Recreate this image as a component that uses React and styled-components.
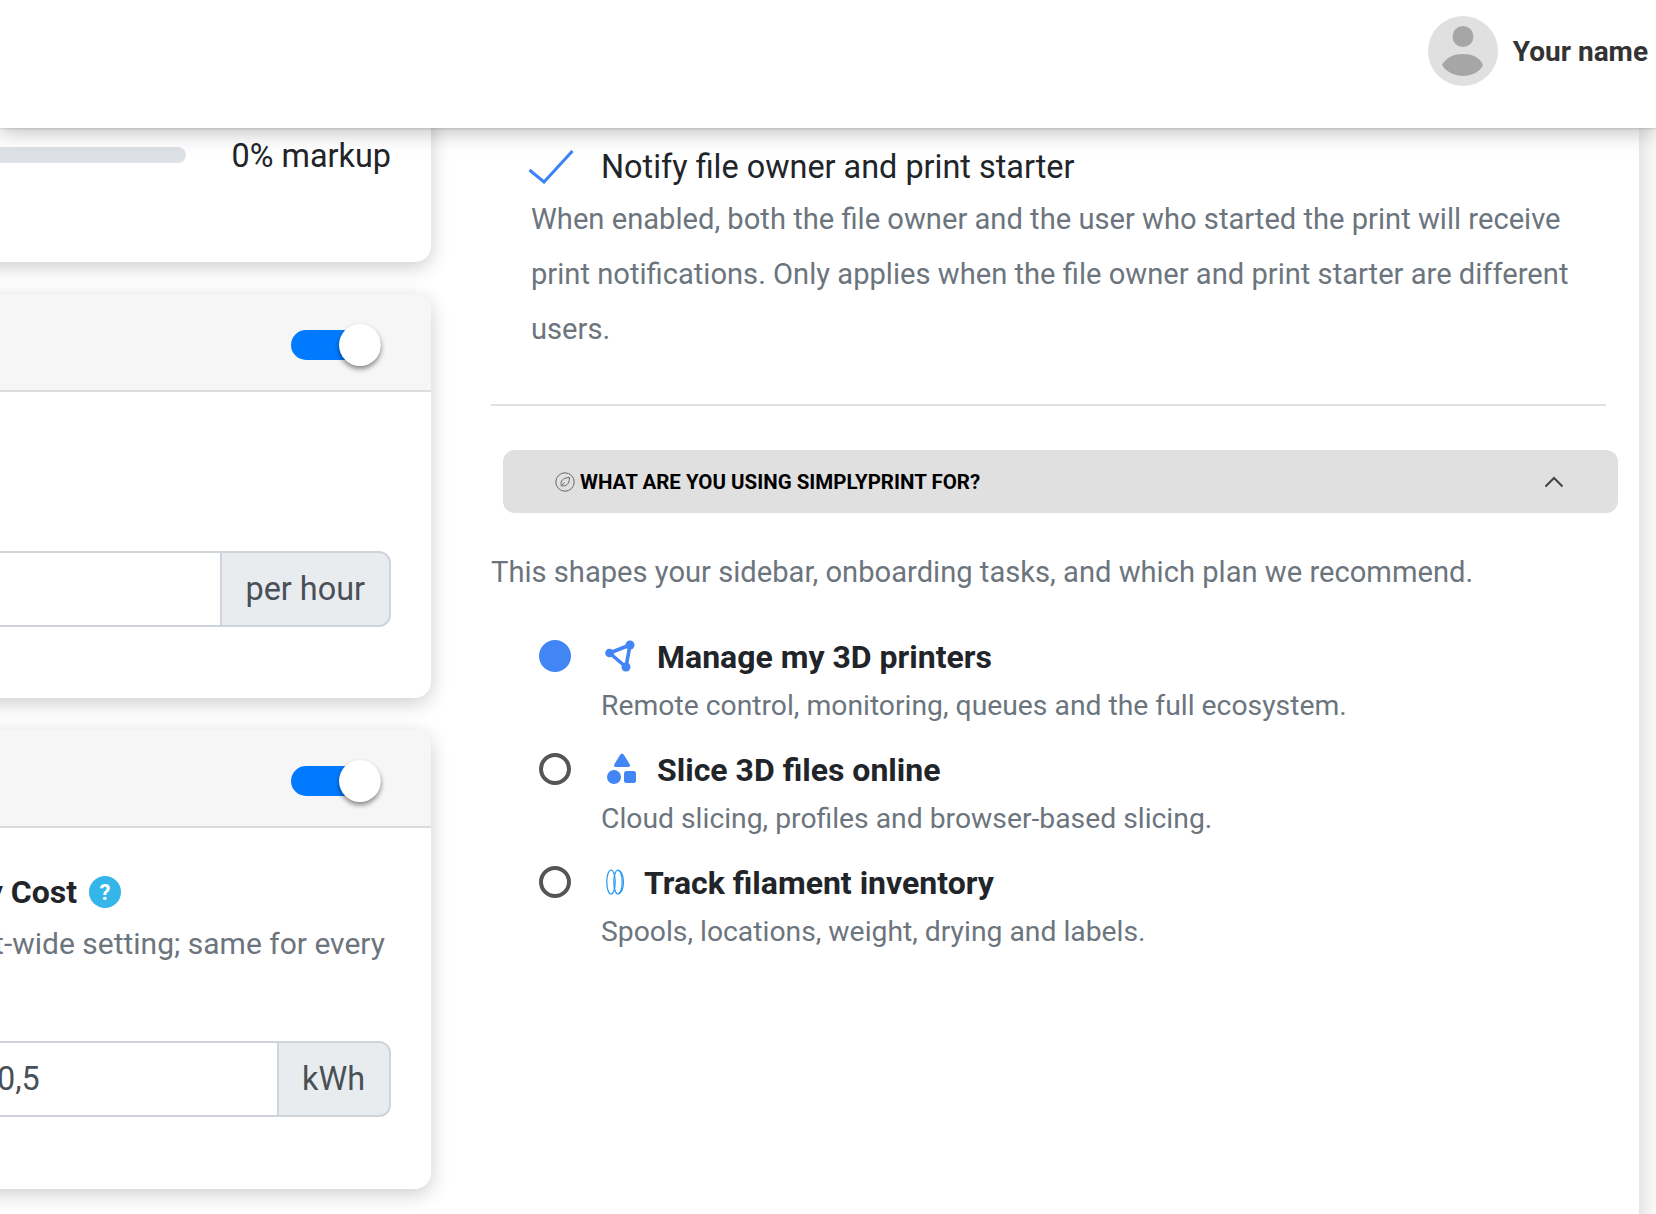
import React from "react";
import styled, { createGlobalStyle } from "styled-components";

const Global = createGlobalStyle`
  html, body { margin: 0; padding: 0; background: #fff; }
  body { font-family: Roboto, "Liberation Sans", sans-serif; color: #212529; }
  * { box-sizing: border-box; }
`;

const Page = styled.div`
  width: 1656px;
  height: 1214px;
  overflow: hidden;
  display: flex;
  flex-direction: column;
  background: #fff;
`;

const TopBar = styled.header`
  flex: 0 0 128px;
  height: 128px;
  background: #fff;
  box-shadow: 0 1px 2px rgba(0, 0, 0, 0.12), 0 4px 20px rgba(0, 0, 0, 0.26);
  position: relative;
  z-index: 5;
  display: flex;
  align-items: center;
  justify-content: flex-end;
  padding: 0 8px 26px 0;
  gap: 15px;
`;

const UserName = styled.span`
  font-size: 28px;
  font-weight: 700;
  color: #333;
`;

const Main = styled.main`
  flex: 1;
  display: flex;
  min-height: 0;
  align-items: flex-start;
`;

const LeftColumn = styled.div`
  width: 631px;
  margin-left: -200px;
  flex: none;
  display: flex;
  flex-direction: column;
  gap: 32px;
  margin-top: -60px;
  position: relative;
  z-index: 1;
`;

const Card = styled.section`
  background: #fff;
  border-radius: 16px;
  box-shadow: 0 5px 20px rgba(0, 0, 0, 0.2);
  height: ${(p) => p.$h}px;
  display: flex;
  flex-direction: column;
  overflow: hidden;
`;

const CardHead = styled.div`
  flex: 0 0 98px;
  background: #f6f6f6;
  border-bottom: 2px solid #dcdcdc;
  display: flex;
  align-items: center;
  justify-content: flex-end;
  padding-right: 50px;
`;

const Track = styled.span`
  width: 90px;
  height: 30px;
  margin-top: 5px;
  border-radius: 15px;
  background: #007bff;
  position: relative;
  display: block;
`;

const Knob = styled.span`
  position: absolute;
  right: 0;
  top: -6px;
  width: 42px;
  height: 42px;
  border-radius: 50%;
  background: #fff;
  box-shadow: 0 3px 5px rgba(0, 0, 0, 0.45);
`;

const MarkupBody = styled.div`
  display: flex;
  align-items: flex-start;
  padding: 69px 40px 0 0;
  justify-content: space-between;
`;

const Bar = styled.div`
  width: 386px;
  height: 16px;
  margin-top: 10px;
  border-radius: 8px;
  background: #dee2e6;
`;

const MarkupText = styled.span`
  font-size: 32.4px;
  line-height: 38px;
`;

const CardBody = styled.div`
  flex: 1;
  padding: ${(p) => p.$top}px 40px 0 0;
  display: flex;
  flex-direction: column;
  align-items: flex-end;
`;

const CostRow = styled.div`
  display: flex;
  align-items: center;
  gap: 12px;
  margin-right: 270px;
  height: 38px;
`;

const CostLabel = styled.span`
  font-size: 32px;
  font-weight: 700;
  white-space: nowrap;
`;

const Help = styled.span`
  width: 32px;
  height: 32px;
  border-radius: 50%;
  background: #35b6e8;
  color: #fff;
  font-size: 22px;
  font-weight: 700;
  display: flex;
  align-items: center;
  justify-content: center;
`;

const CostHint = styled.p`
  margin: 14px 6px 0 0;
  font-size: 30px;
  line-height: 38px;
  color: #6c757d;
  white-space: nowrap;
`;

const InputGroup = styled.div`
  display: flex;
  width: ${(p) => p.$w}px;
  height: 76px;
  margin-top: ${(p) => p.$mt || 0}px;
  font-size: 32.4px;
  color: #495057;
`;

const InputField = styled.div`
  flex: 1;
  border: 2px solid #ced4da;
  border-right: 0;
  background: #fff;
  display: flex;
  align-items: center;
  padding-left: ${(p) => p.$pad || 0}px;
`;

const Addon = styled.div`
  flex: none;
  border: 2px solid #ced4da;
  border-radius: 0 12px 12px 0;
  background: #e9ecef;
  padding: 0 24px 0 23px;
  display: flex;
  align-items: center;
`;

const RightPanel = styled.div`
  width: 1208px;
  flex: none;
  background: #fff;
  box-shadow: 0 0 28px rgba(0, 0, 0, 0.2);
  clip-path: inset(0 -40px -40px 0);
  height: 1140px;
  padding: 0 33px 0 60px;
`;

const CheckRow = styled.div`
  display: flex;
  align-items: center;
  height: 50px;
  margin-top: 14px;
  margin-left: 37px;
  gap: 27px;
`;

const CheckLabel = styled.span`
  font-size: 32.4px;
`;

const Hint = styled.p`
  margin: 0 0 0 40px;
  font-size: 29.15px;
  line-height: 55px;
  color: #6c757d;
`;

const Rule = styled.hr`
  border: 0;
  height: 2px;
  background: #dee2e6;
  margin: 47px 0 44px;
`;

const Accordion = styled.div`
  height: 63px;
  margin: 0 -12px 0 12px;
  background: #e0e0e0;
  border-radius: 12px;
  display: flex;
  align-items: center;
  padding: 0 54px 0 52px;
  font-size: 20.5px;
  font-weight: 700;
  color: #000;
  text-transform: uppercase;
`;

const AccordionTitle = styled.span`
  flex: 1;
  margin-left: 5px;
`;

const Lead = styled.p`
  margin: 39px 0 0;
  font-size: 29.15px;
  line-height: 40px;
  color: #6c757d;
`;

const Options = styled.div`
  margin: 44px 0 0 48px;
  display: flex;
  flex-direction: column;
`;

const Option = styled.div`
  display: grid;
  grid-template-columns: 32px auto 1fr;
  grid-template-rows: 40px 53px;
  height: 113px;
  align-items: center;
`;

const Radio = styled.span`
  width: 32px;
  height: 32px;
  border-radius: 50%;
  background: ${(p) => (p.$on ? "#4285f4" : "#fff")};
  border: ${(p) => (p.$on ? "0" : "4px solid #555")};
`;

const OptionIcon = styled.span`
  margin-left: ${(p) => p.$x}px;
  display: flex;
  width: ${(p) => p.$w}px;
`;

const OptionTitle = styled.span`
  font-size: 32px;
  font-weight: 700;
  color: #212529;
  padding-top: 1px;
  margin-left: ${(p) => p.$ml}px;
`;

const OptionHint = styled.span`
  grid-column: 2 / 4;
  margin-left: 30px;
  font-size: 28.3px;
  color: #6c757d;
  padding-top: 6px;
`;

const Avatar = () => (
  <svg width="70" height="70" viewBox="0 0 70 70">
    <circle cx="35" cy="35" r="35" fill="#e0e0e0" />
    <circle cx="35" cy="20.5" r="10.5" fill="#a6a6a6" />
    <path d="M14 49 C18 41 27 38 35 38 C43 38 52 41 55 49 C52 56 43 60 35 60 C27 60 18 56 14 49 Z" fill="#a6a6a6" />
  </svg>
);

const Check = () => (
  <svg width="46" height="34" viewBox="0 0 46 34" fill="none">
    <path d="M1.5 20 L16 32 L44.5 1" stroke="#3b82f6" strokeWidth="3" />
  </svg>
);

const Compass = () => (
  <svg width="20" height="20" viewBox="0 0 20 20" fill="none" stroke="#666" strokeWidth="1">
    <circle cx="10" cy="10" r="9.2" />
    <path d="M14.5 5.5 C10 5.5 6 7.5 6 11.5 C6 13 7 14 8.5 14 C12.5 14 14.5 10 14.5 5.5 Z M6 14.5 L9.5 10.5" />
  </svg>
);

const Chevron = () => (
  <svg width="20" height="12" viewBox="0 0 20 12" fill="none" stroke="#444" strokeWidth="2">
    <path d="M1.5 10.5 L10 2 L18.5 10.5" />
  </svg>
);

const PrinterIcon = () => (
  <svg width="30" height="32" viewBox="0 0 30 32" fill="none" stroke="#4285f4" strokeWidth="3.6" strokeLinejoin="round">
    <path d="M4.5 13 L25 5 L21 27 Z" />
    <circle cx="4.5" cy="13" r="4.3" fill="#4285f4" stroke="none" />
    <circle cx="25" cy="5" r="4.5" fill="#4285f4" stroke="none" />
    <circle cx="21" cy="27" r="4.5" fill="#4285f4" stroke="none" />
  </svg>
);

const ShapesIcon = () => (
  <svg width="30" height="32" viewBox="0 0 30 32" fill="#4285f4">
    <path d="M16 0.5 Q17 0.5 18 2 L23.5 11 Q25 14 22 14 H10 Q7 14 8.5 11 L14 2 Q15 0.5 16 0.5 Z" />
    <circle cx="8" cy="24" r="7" />
    <rect x="18" y="18" width="12" height="12" rx="2.5" />
  </svg>
);

const SpoolIcon = () => (
  <svg width="18" height="26" viewBox="0 0 18 26" fill="none" stroke="#2196f3" strokeWidth="1.2">
    <ellipse cx="5" cy="13" rx="4.2" ry="12" />
    <ellipse cx="12" cy="13" rx="4.2" ry="12" />
    <path d="M12 1.5 C15.5 2 17.4 7 17.4 13 C17.4 19 15.5 24 12 24.5" />
  </svg>
);

const Toggle = () => (
  <Track>
    <Knob />
  </Track>
);

export default function App() {
  return (
    <Page>
      <Global />
      <TopBar>
        <Avatar />
        <UserName>Your name</UserName>
      </TopBar>
      <Main>
        <LeftColumn>
          <Card $h={194}>
            <MarkupBody>
              <Bar />
              <MarkupText>0% markup</MarkupText>
            </MarkupBody>
          </Card>
          <Card $h={404}>
            <CardHead>
              <Toggle />
            </CardHead>
            <CardBody $top={159}>
              <InputGroup $w={420}>
                <InputField />
                <Addon>per hour</Addon>
              </InputGroup>
            </CardBody>
          </Card>
          <Card $h={459}>
            <CardHead>
              <Toggle />
            </CardHead>
            <CardBody $top={45}>
              <CostRow>
                <CostLabel>Energy Cost</CostLabel>
                <Help>?</Help>
              </CostRow>
              <CostHint>Account-wide setting; same for every</CostHint>
              <InputGroup $w={420} $mt={78}>
                <InputField $pad={24}>0,5</InputField>
                <Addon>kWh</Addon>
              </InputGroup>
            </CardBody>
          </Card>
        </LeftColumn>
        <RightPanel>
          <CheckRow>
            <Check />
            <CheckLabel>Notify file owner and print starter</CheckLabel>
          </CheckRow>
          <Hint>
            When enabled, both the file owner and the user who started the print will receive print
            notifications. Only applies when the file owner and print starter are different users.
          </Hint>
          <Rule />
          <Accordion>
            <Compass />
            <AccordionTitle>What are you using SimplyPrint for?</AccordionTitle>
            <Chevron />
          </Accordion>
          <Lead>This shapes your sidebar, onboarding tasks, and which plan we recommend.</Lead>
          <Options>
            <Option>
              <Radio $on />
              <OptionIcon $w={30} $x={34}>
                <PrinterIcon />
              </OptionIcon>
              <OptionTitle $ml={22}>Manage my 3D printers</OptionTitle>
              <OptionHint>Remote control, monitoring, queues and the full ecosystem.</OptionHint>
            </Option>
            <Option>
              <Radio />
              <OptionIcon $w={30} $x={35}>
                <ShapesIcon />
              </OptionIcon>
              <OptionTitle $ml={21}>Slice 3D files online</OptionTitle>
              <OptionHint>Cloud slicing, profiles and browser-based slicing.</OptionHint>
            </Option>
            <Option>
              <Radio />
              <OptionIcon $w={18} $x={35}>
                <SpoolIcon />
              </OptionIcon>
              <OptionTitle $ml={20}>Track filament inventory</OptionTitle>
              <OptionHint>Spools, locations, weight, drying and labels.</OptionHint>
            </Option>
          </Options>
        </RightPanel>
      </Main>
    </Page>
  );
}
